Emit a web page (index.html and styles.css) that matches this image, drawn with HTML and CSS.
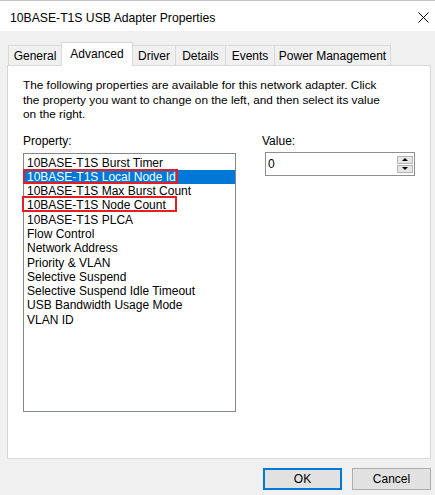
FILE: index.html
```html
<!DOCTYPE html>
<html lang="en">
<head>
<meta charset="utf-8">
<title>10BASE-T1S USB Adapter Properties</title>
<link rel="stylesheet" href="styles.css">
</head>
<body>
<div class="window">
  <header class="titlebar">
    <span class="title">10BASE-T1S USB Adapter Properties</span>
    <svg class="close" width="11" height="11" viewBox="0 0 11 11" aria-label="Close">
      <path d="M0.5 0.5 L10.5 10.5 M10.5 0.5 L0.5 10.5" stroke="#000" stroke-width="1" fill="none"/>
    </svg>
  </header>
  <nav class="tabs">
    <div class="tab tab-general">General</div>
    <div class="tab tab-advanced active">Advanced</div>
    <div class="tab tab-driver">Driver</div>
    <div class="tab tab-details">Details</div>
    <div class="tab tab-events">Events</div>
    <div class="tab tab-power">Power Management</div>
  </nav>
  <section class="panel">
    <p class="desc">The following properties are available for this network adapter. Click<br>the property you want to change on the left, and then select its value<br>on the right.</p>
    <div class="params">
      <div class="col">
        <span class="label">Property:</span>
        <div class="listbox">
          <ul class="items">
            <li class="item">10BASE-T1S Burst Timer</li>
            <li class="item selected">10BASE-T1S Local Node Id</li>
            <li class="item">10BASE-T1S Max Burst Count</li>
            <li class="item">10BASE-T1S Node Count</li>
            <li class="item">10BASE-T1S PLCA</li>
            <li class="item">Flow Control</li>
            <li class="item">Network Address</li>
            <li class="item">Priority &amp; VLAN</li>
            <li class="item">Selective Suspend</li>
            <li class="item">Selective Suspend Idle Timeout</li>
            <li class="item">USB Bandwidth Usage Mode</li>
            <li class="item">VLAN ID</li>
          </ul>
          <div class="mark mark-local"></div>
          <div class="mark mark-count"></div>
        </div>
      </div>
      <div class="col">
        <span class="label">Value:</span>
        <div class="spin">
          <span class="spin-value">0</span>
          <div class="spin-buttons">
            <div class="spin-btn"><span class="arrow-up"></span></div>
            <div class="spin-btn"><span class="arrow-down"></span></div>
          </div>
        </div>
      </div>
    </div>
  </section>
  <footer class="buttons">
    <button class="btn btn-default">OK</button>
    <button class="btn">Cancel</button>
  </footer>
</div>
</body>
</html>
```
FILE: styles.css
```css
html, body {
  margin: 0;
  padding: 0;
}
body {
  width: 435px;
  height: 495px;
  overflow: hidden;
  background: #f0f0f0;
  font-family: "Liberation Sans", Arial, sans-serif;
  font-size: 12px;
  color: #000;
}
.window {
  width: 435px;
  height: 495px;
}
.titlebar {
  height: 31px;
  box-sizing: border-box;
  padding: 3px 6px 0 10px;
  background: #fff;
  border-top: 1px solid #c4c4c4;
  display: flex;
  align-items: center;
  justify-content: space-between;
}
.title {
  font-size: 12.2px;
  white-space: nowrap;
}
.close {
  display: block;
}
.tabs {
  position: relative;
  z-index: 1;
  display: flex;
  align-items: flex-end;
  height: 23px;
  margin-top: 11px;
  padding-left: 8px;
}
.tab {
  height: 20px;
  box-sizing: border-box;
  border-top: 1px solid #d9d9d9;
  border-right: 1px solid #d9d9d9;
  background: #f0f0f0;
  display: flex;
  align-items: center;
  justify-content: center;
  white-space: nowrap;
}
.tab-general { width: 54px; border-left: 1px solid #d9d9d9; }
.tab-advanced { width: 72px; }
.tab-driver { width: 43px; }
.tab-details { width: 50px; }
.tab-events { width: 49px; }
.tab-power { width: 116px; }
.tab.active {
  height: 24px;
  margin-left: -1px;
  margin-bottom: -1px;
  padding-bottom: 1px;
  background: #fff;
  border-left: 1px solid #d9d9d9;
}
.panel {
  margin-left: 7px;
  width: 424px;
  height: 394px;
  box-sizing: border-box;
  border: 1px solid #d9d9d9;
  background: #fff;
  padding: 12px 0 0 15px;
}
.desc {
  margin: 0;
  font-size: 11.8px;
  line-height: 14.5px;
  white-space: nowrap;
}
.params {
  display: grid;
  grid-template-columns: 213px 153px;
  column-gap: 26px;
  margin-top: 12.5px;
}
.col {
  display: flex;
  flex-direction: column;
}
.label {
  display: block;
  height: 15px;
  line-height: 15px;
}
.listbox {
  position: relative;
  margin-top: 4px;
  height: 259px;
  box-sizing: border-box;
  border: 1px solid #828790;
  background: #fff;
}
.items {
  list-style: none;
  margin: 0;
  padding: 1.5px 0 0 0;
}
.item {
  height: 14.3px;
  line-height: 14.3px;
  padding-left: 3px;
  white-space: nowrap;
}
.item.selected {
  background: #0078d7;
  color: #fff;
}
.mark {
  position: absolute;
  box-sizing: border-box;
  border: 2px solid #e41e26;
  width: 155px;
}
.mark-local {
  left: -1px;
  top: 15px;
  height: 15px;
}
.mark-count {
  left: -2px;
  top: 42px;
  height: 16px;
}
.spin {
  margin: 3px 0 0 3px;
  width: 150px;
  height: 24px;
  box-sizing: border-box;
  border: 1px solid #8f8f8f;
  padding: 0 1px 0 2px;
  display: flex;
  align-items: center;
  justify-content: space-between;
  background: #fff;
}
.spin-value {
  line-height: 14px;
}
.spin-buttons {
  display: flex;
  flex-direction: column;
  gap: 1px;
}
.spin-btn {
  width: 16px;
  height: 8px;
  box-sizing: border-box;
  border: 1px solid #b4b4b4;
  background: #e6e6e6;
  display: flex;
  align-items: center;
  justify-content: center;
}
.arrow-up {
  width: 0;
  height: 0;
  border-left: 3px solid transparent;
  border-right: 3px solid transparent;
  border-bottom: 3px solid #000;
}
.arrow-down {
  width: 0;
  height: 0;
  border-left: 3px solid transparent;
  border-right: 3px solid transparent;
  border-top: 3px solid #000;
}
.buttons {
  display: flex;
  justify-content: flex-end;
  gap: 10px;
  padding: 9px 4px 0 0;
}
.btn {
  width: 79px;
  height: 22px;
  box-sizing: border-box;
  margin: 0;
  padding: 0;
  border: 1px solid #adadad;
  background: #e1e1e1;
  font-family: inherit;
  font-size: 12px;
  color: #000;
}
.btn-default {
  border-color: #0078d7;
  box-shadow: inset 0 0 0 1px #0078d7;
}
```
